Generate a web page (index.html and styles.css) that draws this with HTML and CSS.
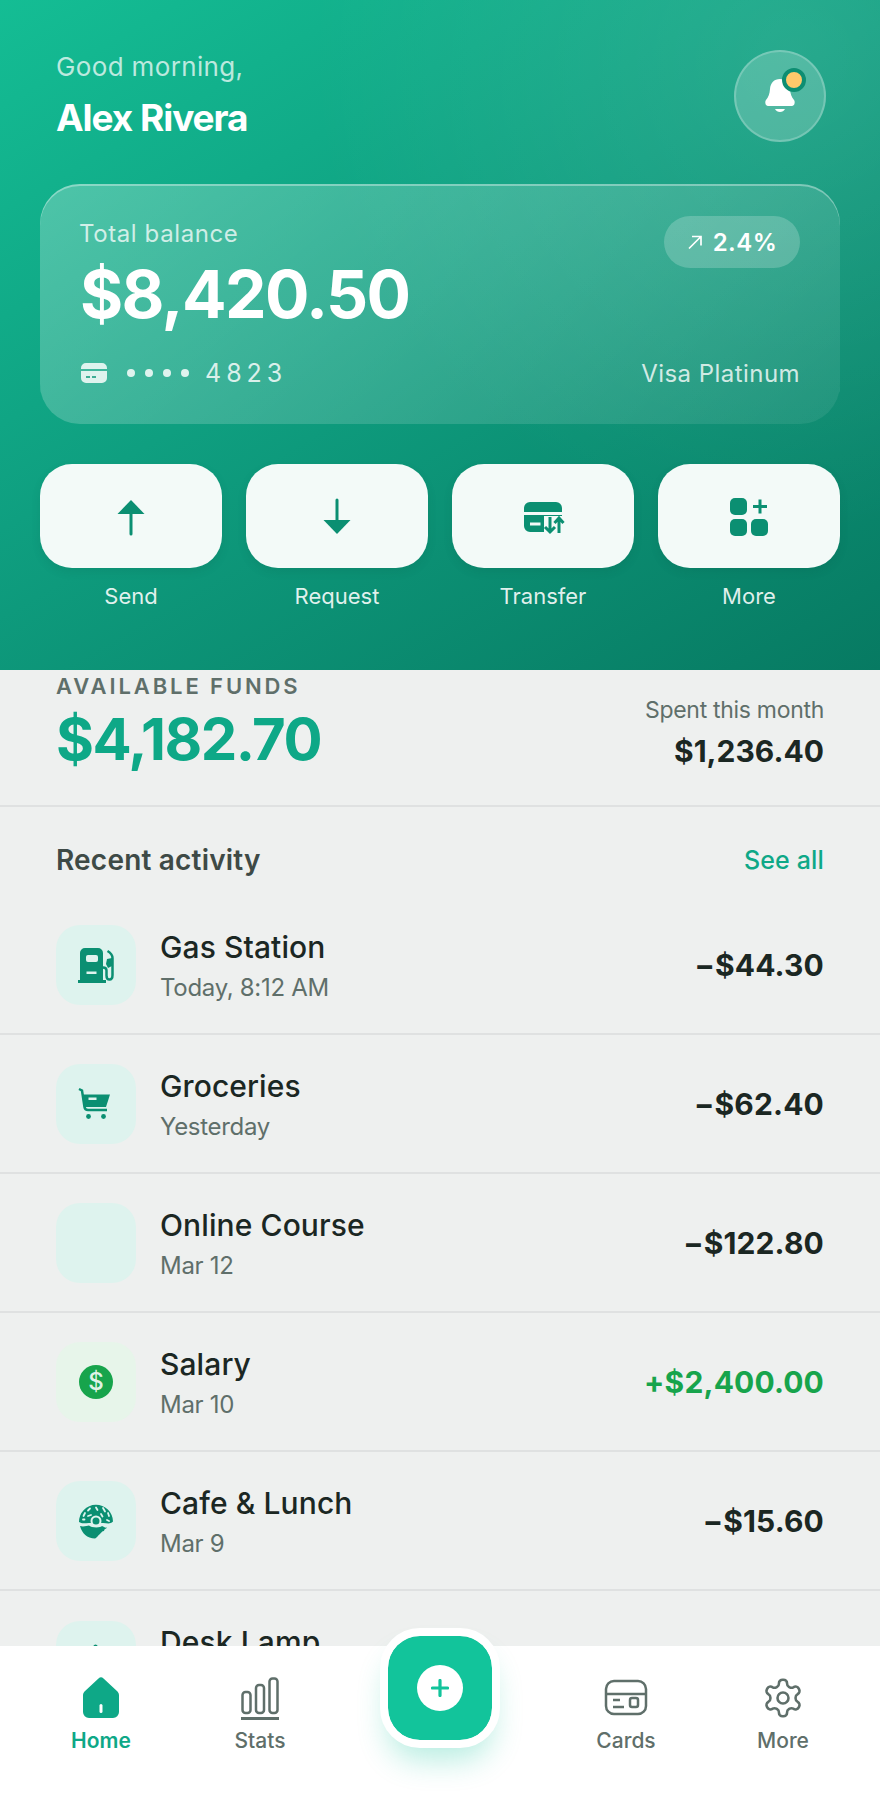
FILE: index.html

```html
<!DOCTYPE html>
<html lang="en">
<head>
    <meta charset="UTF-8">
    <meta name="viewport" content="width=device-width, initial-scale=1.0">
    <title>Wallet</title>
    <link rel="stylesheet" href="styles.css">
</head>
<body>
<div class="app">
    <header class="hero">
        <div class="top">
            <div>
                <div class="greet">Good morning,</div>
                <div class="name">Alex Rivera</div>
            </div>
            <button class="bell">
                <svg width="40" height="44" viewBox="0 0 40 44"><path fill="#fff" d="M20 5c-6 0-9.500 4-10 10-.4 5-1.500 8-4 11-1.500 2-.5 6 2 6h24c2.500 0 3.500-4 2-6-2.500-3-3.600-6-4-11-.5-6-4-10-10-10z"/><path fill="#fff" d="M15 35h10c-1 2-2.800 3-5 3s-4-1-5-3z"/></svg>
                <span class="dot"></span>
            </button>
        </div>

        <section class="card">
            <div class="card-top">
                <div>
                    <div class="card-label">Total balance</div>
                    <div class="card-amount">$8,420.50</div>
                </div>
                <div class="pill">
                    <svg width="16" height="16" viewBox="0 0 16 16"><path d="M2 14.500 14 2.500M5 2.500h9v9" fill="none" stroke="#fff" stroke-width="1.700"/></svg>
                    2.4%
                </div>
            </div>
            <div class="card-foot">
                <div class="card-num">
                    <svg width="26" height="20" viewBox="0 0 26 20"><path fill="#dff3ee" d="M0 5a5 5 0 0 1 5-5h16a5 5 0 0 1 5 5v1H0zM0 8h26v7a5 5 0 0 1-5 5H5a5 5 0 0 1-5-5z"/><path d="M5 14h4M11 14h4" stroke="#3fae95" stroke-width="2"/></svg>
                    <span class="dots"><i></i><i></i><i></i><i></i></span>
                    <span class="digits">4823</span>
                </div>
                <div class="card-type">Visa Platinum</div>
            </div>
        </section>

        <div class="actions">
            <div class="action">
                <div class="action-btn">
                    <svg width="48" height="48" viewBox="0 0 48 48"><path fill="#0b8f72" d="M24 8l13.500 14H10.500z"/><path d="M24 20v22" stroke="#0b8f72" stroke-width="3" stroke-linecap="round"/></svg>
                </div>
                <span>Send</span>
            </div>
            <div class="action">
                <div class="action-btn">
                    <svg width="48" height="48" viewBox="0 0 48 48"><path fill="#0b8f72" d="M24 42L10.500 28h27z"/><path d="M24 8v22" stroke="#0b8f72" stroke-width="3" stroke-linecap="round"/></svg>
                </div>
                <span>Request</span>
            </div>
            <div class="action">
                <div class="action-btn">
                    <svg width="48" height="48" viewBox="0 0 48 48">
                        <path fill="#0b8f72" d="M5 16a6 6 0 0 1 6-6h26a6 6 0 0 1 6 6v4H5zM5 23h38v11a6 6 0 0 1-6 6H11a6 6 0 0 1-6-6z"/>
                        <path fill="#f3faf8" d="M25 24h22v20H25z"/>
                        <path d="M11 32h10.500" stroke="#f3faf8" stroke-width="3"/>
                        <path d="M31 25v15M26 35l5 5 5-5M40 41V26M35.500 31l4.500-5 4.500 5" fill="none" stroke="#0b8f72" stroke-width="3"/>
                    </svg>
                </div>
                <span>Transfer</span>
            </div>
            <div class="action">
                <div class="action-btn">
                    <svg width="48" height="48" viewBox="0 0 48 48"><g fill="#0b8f72"><rect x="5" y="6" width="17" height="17" rx="5"/><rect x="5" y="27" width="17" height="17" rx="5"/><rect x="26" y="27" width="17" height="17" rx="5"/></g><path d="M28 14.500h14M35 7.500v14" stroke="#0b8f72" stroke-width="3"/></svg>
                </div>
                <span>More</span>
            </div>
        </div>
    </header>

    <main class="content">
        <section class="funds">
            <div>
                <div class="funds-label">AVAILABLE FUNDS</div>
                <div class="funds-amount">$4,182.70</div>
            </div>
            <div class="spent">
                <div class="spent-label">Spent this month</div>
                <div class="spent-amount">$1,236.40</div>
            </div>
        </section>

        <div class="list-head">
            <h2>Recent activity</h2>
            <a class="see-all">See all</a>
        </div>

        <div class="row">
            <div class="ico">
                <svg width="40" height="40" viewBox="0 0 40 40">
                    <path fill="#0b8f72" d="M4 8a5 5 0 0 1 5-5h13a5 5 0 0 1 5 5v27H30v3H2v-3h2z"/>
                    <rect x="10" y="10" width="12" height="7" rx="2" fill="#dff3ee"/>
                    <rect x="10.500" y="26.500" width="10" height="2.500" fill="#dff3ee"/>
                    <path d="M31.500 6c3 1.800 5 3.500 5 7v17c0 3-1 4.500-3 4.500s-3-1.500-3-4v-5c0-2-1-3-3.500-3" fill="none" stroke="#0b8f72" stroke-width="2.500"/>
                    <path fill="#0b8f72" d="M31 14l5-1v8l-4 2-2-4z"/>
                </svg>
            </div>
            <div class="info"><div class="title">Gas Station</div><div class="sub">Today, 8:12 AM</div></div>
            <div class="amount">−$44.30</div>
        </div>
        <div class="row">
            <div class="ico">
                <svg width="40" height="40" viewBox="0 0 40 40">
                    <path d="M3 5l3 1.500 2.500 16.500c.3 2 1.500 3 3.500 3h19" fill="none" stroke="#0b8f72" stroke-width="2.500"/>
                    <path fill="#0b8f72" d="M6 10.500h28L30 23H8z"/>
                    <rect x="12.500" y="13.500" width="8" height="2.500" fill="#dff3ee"/>
                    <circle cx="12.500" cy="32.500" r="2.400" fill="#0b8f72"/><circle cx="27.500" cy="32.500" r="2.400" fill="#0b8f72"/>
                </svg>
            </div>
            <div class="info"><div class="title">Groceries</div><div class="sub">Yesterday</div></div>
            <div class="amount">−$62.40</div>
        </div>
        <div class="row">
            <div class="ico"></div>
            <div class="info"><div class="title">Online Course</div><div class="sub">Mar 12</div></div>
            <div class="amount">−$122.80</div>
        </div>
        <div class="row">
            <div class="ico ico-green"><span class="coin">$</span></div>
            <div class="info"><div class="title">Salary</div><div class="sub">Mar 10</div></div>
            <div class="amount plus">+$2,400.00</div>
        </div>
        <div class="row">
            <div class="ico">
                <svg width="40" height="40" viewBox="0 0 40 40">
                    <g fill="#0b8f72">
                        <path d="M3 21A17 17 0 0 1 37 20.500c-3 3-6 1.500-10 1.500H13c-4 0-7 1-10-1z"/>
                        <path d="M4 25c3 1 7 0 9-.5 2 2.500 12 2.500 13 .5 2 1 3 2 5 1.500-1 1.500-3 1.500-3 3.500-2 0-3 2-4 3-2 1-2 3-5 4.500-8 0-13-5-15-12.500z"/>
                    </g>
                    <circle cx="20" cy="20" r="4.500" fill="#0b8f72" stroke="#dff3ee" stroke-width="2"/>
                    <path d="M9 12l-1.500 3M14 7.500l-2 2M20 6.500l1.500 2.500M27 7l2 3.500M32 12l1 3M12 15l3-1M25 13l1.500 2.500M7 18.500h1.500M31 19l2 1" stroke="#dff3ee" stroke-width="1.800" stroke-linecap="round"/>
                </svg>
            </div>
            <div class="info"><div class="title">Cafe &amp; Lunch</div><div class="sub">Mar 9</div></div>
            <div class="amount">−$15.60</div>
        </div>
        <div class="row">
            <div class="ico">
                <svg width="40" height="40" viewBox="0 0 40 40"><path d="M17 7a2.500 3.500 0 0 1 5 0z" fill="#0b8f72"/></svg>
            </div>
            <div class="info info-cut"><div class="title">Desk Lamp</div></div>
        </div>
    </main>

    <nav class="tabbar">
        <a class="tab active">
            <svg width="44" height="44" viewBox="0 0 44 44"><path fill="#0ea887" d="M19.500 2.500a3.500 3.500 0 0 1 5 0l14 13a5 5 0 0 1 1.500 3.600V36a6 6 0 0 1-6 6H10a6 6 0 0 1-6-6V19.100a5 5 0 0 1 1.500-3.600z"/><rect x="20.500" y="28" width="3" height="9" rx="1.500" fill="#fff"/></svg>
            <span>Home</span>
        </a>
        <a class="tab">
            <svg width="44" height="44" viewBox="0 0 44 44"><g fill="none" stroke="#5f6f6a" stroke-width="2.500"><rect x="4.500" y="16" width="8" height="21" rx="3"/><rect x="18" y="9" width="8" height="28" rx="3"/><rect x="31.500" y="2.500" width="8" height="34.500" rx="3"/></g><path d="M3 42.500h38" stroke="#5f6f6a" stroke-width="3"/></svg>
            <span>Stats</span>
        </a>
        <button class="fab">
            <span class="fab-plus">
                <svg width="18" height="18" viewBox="0 0 18 18"><path d="M9 1.500v15M1.500 9h15" stroke="#12c49b" stroke-width="3.200" stroke-linecap="round"/></svg>
            </span>
        </button>
        <a class="tab">
            <svg width="44" height="44" viewBox="0 0 44 44"><g fill="none" stroke="#5f6f6a" stroke-width="2.500"><rect x="2" y="5" width="40" height="33" rx="8"/><path d="M2 18h40"/><rect x="26" y="22" width="8" height="9" rx="2"/></g><path d="M9 24h7M9 31h11" stroke="#5f6f6a" stroke-width="2.500"/></svg>
            <span>Cards</span>
        </a>
        <a class="tab">
            <svg width="44" height="44" viewBox="0 0 24 24" fill="none" stroke="#5f6f6a" stroke-width="1.400"><path d="M12.220 2h-.44a2 2 0 0 0-2 2v.18a2 2 0 0 1-1 1.730l-.43.250a2 2 0 0 1-2 0l-.15-.08a2 2 0 0 0-2.730.730l-.22.380a2 2 0 0 0 .73 2.730l.15.100a2 2 0 0 1 1 1.720v.510a2 2 0 0 1-1 1.740l-.15.090a2 2 0 0 0-.73 2.730l.22.380a2 2 0 0 0 2.730.730l.15-.08a2 2 0 0 1 2 0l.43.250a2 2 0 0 1 1 1.730V20a2 2 0 0 0 2 2h.44a2 2 0 0 0 2-2v-.18a2 2 0 0 1 1-1.730l.43-.25a2 2 0 0 1 2 0l.15.080a2 2 0 0 0 2.730-.73l.22-.39a2 2 0 0 0-.73-2.730l-.15-.08a2 2 0 0 1-1-1.740v-.5a2 2 0 0 1 1-1.740l.15-.09a2 2 0 0 0 .73-2.730l-.22-.38a2 2 0 0 0-2.730-.73l-.15.08a2 2 0 0 1-2 0l-.43-.25a2 2 0 0 1-1-1.730V4a2 2 0 0 0-2-2z"/><circle cx="12" cy="12" r="3"/></svg>
            <span>More</span>
        </a>
    </nav>
</div>
</body>
</html>
```

FILE: styles.css

```css
* { box-sizing: border-box; }
body { margin: 0; font-family: "Inter", "Noto Sans", sans-serif; background: #eef0ef; color: #1b2723; }
button { border: 0; padding: 0; font: inherit; }

.app { width: 880px; height: 1800px; display: flex; flex-direction: column; overflow: hidden; }

/* green header */
.hero {
    height: 670px;
    padding: 50px 40px 0;
    flex: none;
    color: #fff;
    background:
        radial-gradient(circle at 90% 8%, rgba(255,255,255,.1), rgba(255,255,255,0) 48%),
        linear-gradient(150deg, #14bd94 0%, #0f9f80 45%, #077a62 100%);
}
.top { display: flex; justify-content: space-between; align-items: flex-start; padding: 0 14px 0 16px; height: 134px; }
.greet { font-size: 26px; line-height: 32px; margin-top: 1px; color: rgba(255,255,255,.72); letter-spacing: .35px; }
.name { font-size: 37px; line-height: 46px; font-weight: 700; margin-top: 12px; letter-spacing: -1.050px; }
.bell {
    width: 92px; height: 92px; border-radius: 50%;
    background: rgba(255,255,255,.2);
    border: 2px solid rgba(255,255,255,.22);
    display: flex; align-items: center; justify-content: center;
    position: relative;
}
.dot {
    position: absolute; top: 16px; left: 46px;
    width: 24px; height: 24px; border-radius: 50%;
    background: #ffc96b; border: 4px solid #0d8e72;
}

.card {
    height: 240px;
    border-radius: 40px;
    padding: 35px 40px 0 39px;
    background: linear-gradient(140deg, rgba(255,255,255,.25), rgba(255,255,255,.07));
    box-shadow: inset 0 2px 0 rgba(255,255,255,.35);
}
.card-top { display: flex; justify-content: space-between; align-items: flex-start; height: 139px; }
.card-label { font-size: 24px; line-height: 30px; color: rgba(255,255,255,.75); letter-spacing: .6px; }
.card-amount { font-size: 66px; line-height: 80px; font-weight: 700; letter-spacing: -1.600px; margin-top: 5px; margin-left: 1px; }
.pill {
    height: 52px; width: 136px; margin-top: -3px;
    border-radius: 26px;
    background: rgba(255,255,255,.2);
    display: flex; align-items: center; justify-content: center; gap: 10px;
    font-size: 24px; font-weight: 600; letter-spacing: .5px;
}
.card-foot { display: flex; justify-content: space-between; align-items: center; }
.card-num { display: flex; align-items: center; margin-left: 2px; }
.dots { display: flex; gap: 10px; margin-left: 20px; }
.dots i { width: 8px; height: 8px; border-radius: 50%; background: #dff3ee; }
.digits { margin-left: 16px; font-size: 25px; letter-spacing: 5px; color: rgba(255,255,255,.82); }
.card-type { font-size: 24px; letter-spacing: .45px; color: rgba(255,255,255,.8); }

.actions { display: grid; grid-template-columns: repeat(4, 1fr); gap: 24px; margin-top: 40px; }
.action { text-align: center; font-size: 22px; line-height: 28px; color: rgba(255,255,255,.88); }
.action-btn {
    height: 104px; border-radius: 32px;
    background: #f3faf8;
    box-shadow: 0 4px 10px rgba(0,60,45,.1);
    display: flex; align-items: center; justify-content: center;
    margin-bottom: 14px;
}
.action-btn svg { display: block; }

/* list */
.content { flex: 1; min-height: 0; overflow: hidden; }
.funds {
    height: 137px;
    padding: 0 56px;
    border-bottom: 2px solid #dfe1e1;
    display: flex; justify-content: space-between; align-items: flex-start;
}
.funds-label { font-size: 22px; line-height: 28px; margin-top: 2px; font-weight: 600; letter-spacing: 2.900px; color: #5f6f6a; }
.funds-amount { font-size: 58px; line-height: 70px; margin-top: 4px; font-weight: 700; color: #0ea887; letter-spacing: -1.500px; }
.spent { text-align: right; padding-top: 25px; }
.spent-label { font-size: 23px; line-height: 30px; color: #5f6f6a; letter-spacing: -.3px; }
.spent-amount { font-size: 30px; line-height: 40px; margin-top: 6px; font-weight: 700; color: #1b2723; }

.list-head { height: 89px; padding: 16px 56px 0; display: flex; justify-content: space-between; align-items: center; }
.list-head h2 { margin: 0; font-size: 28px; font-weight: 600; color: #3e4a46; letter-spacing: .2px; }
.see-all { font-size: 25px; font-weight: 500; letter-spacing: .15px; color: #0ea887; }

.row {
    height: 139px; padding: 0 56px;
    display: flex; align-items: center;
    border-bottom: 2px solid #dfe1e1;
}
.row:last-child { border-bottom: 0; }
.ico {
    width: 80px; height: 80px; flex: none;
    border-radius: 24px;
    background: #def3ee;
    display: flex; align-items: center; justify-content: center;
}
.ico-green { background: #e7f5ea; }
.coin {
    width: 34px; height: 34px; border-radius: 50%;
    background: #17a44c; color: #dff3e6;
    display: flex; align-items: center; justify-content: center;
    font-size: 24px; font-weight: 500;
}
.info { flex: 1; margin-left: 24px; padding-top: 3px; }
.info-cut { align-self: flex-start; padding-top: 30px; }
.title { font-size: 30px; line-height: 42px; font-weight: 500; letter-spacing: .1px; color: #1b2723; }
.sub { font-size: 24px; line-height: 36px; margin-top: 2px; color: #5f6f6a; letter-spacing: -.3px; }
.amount { font-size: 30px; font-weight: 700; letter-spacing: .15px; color: #1b2723; }
.plus { color: #17a44c; }

/* bottom nav */
.tabbar {
    height: 154px; flex: none;
    background: #fff;
    display: grid;
    grid-template-columns: 202px 116px 244px 128px 186px;
    align-items: start;
    padding-top: 30px;
    position: relative;
}
.tab { display: flex; flex-direction: column; align-items: center; font-size: 21px; font-weight: 500; color: #5f6f6a; }
.tab svg { display: block; margin-bottom: 8px; }
.tab span { line-height: 26px; }
.tab.active { color: #0ea887; font-weight: 600; }
.fab {
    width: 120px; height: 120px; margin: -48px auto 0;
    border-radius: 40px;
    border: 8px solid #fff;
    background: #12c49b;
    background-clip: padding-box;
    box-shadow: 0 20px 30px -8px rgba(18,196,155,.3);
    display: flex; align-items: center; justify-content: center;
}
.fab-plus {
    width: 46px; height: 46px; border-radius: 50%;
    background: #fff;
    display: flex; align-items: center; justify-content: center;
}
```
